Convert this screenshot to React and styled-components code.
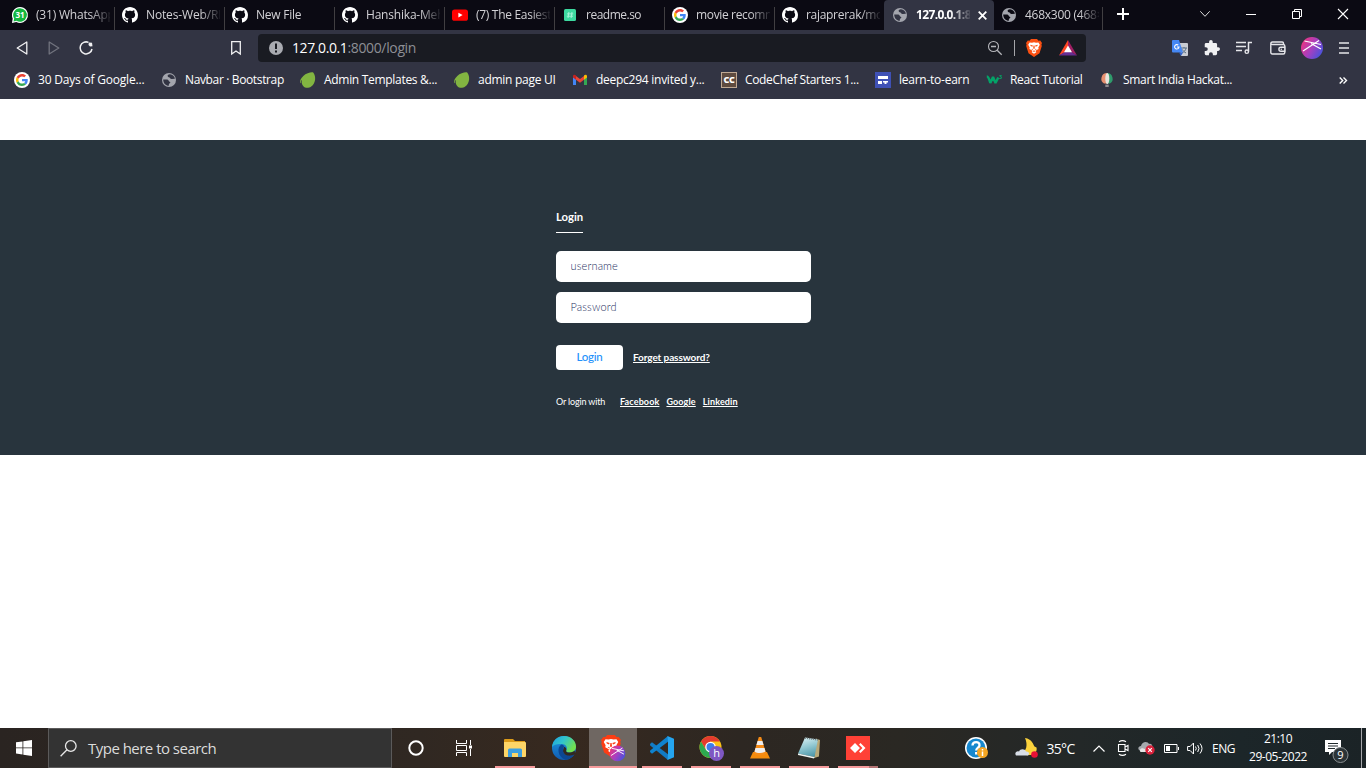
import React from 'react';
import styled, { createGlobalStyle } from 'styled-components';

const Global = createGlobalStyle`
  * { box-sizing: border-box; }
  html, body { margin: 0; padding: 0; background: #fff; }
  body { overflow: hidden; font-family: "Open Sans", "Noto Sans", sans-serif; }
  svg { display: block; flex: none; overflow: visible; }
`;

const Screen = styled.div`
  width: 1366px;
  height: 768px;
  display: flex;
  flex-direction: column;
  background: #fff;
`;

/* ---------- icons ---------- */
const Svg = ({ s = 16, h, vb, children }) => (
  <svg width={s} height={h || s} viewBox={vb || `0 0 ${s} ${h || s}`} fill="none">{children}</svg>
);

const WhatsApp = () => (
  <Svg>
    <path d="M8 0a8 8 0 1 1-3.700 15.100L0 16l.7-4.600A8 8 0 0 1 8 0z" fill="#fff" />
    <path d="M8 1.200a6.800 6.800 0 1 1-3.500 12.600L1.500 14.500l.7-3A6.800 6.800 0 0 1 8 1.200z" fill="#12b83f" />
    <text x="8" y="11" fontSize="8" fontWeight="700" fill="#fff" textAnchor="middle">31</text>
  </Svg>
);
const Github = () => (
  <Svg>
    <path fill="#fff" d="M8 0C3.580 0 0 3.580 0 8c0 3.540 2.290 6.530 5.470 7.590.4.070.55-.17.55-.38 0-.19-.01-.82-.01-1.490-2.010.37-2.530-.49-2.690-.94-.09-.23-.48-.94-.82-1.130-.28-.15-.68-.52-.01-.53.63-.01 1.080.58 1.230.82.72 1.210 1.870.87 2.330.66.070-.52.28-.87.51-1.070-1.780-.2-3.640-.89-3.640-3.950 0-.87.31-1.590.82-2.150-.08-.2-.36-1.020.08-2.120 0 0 .67-.21 2.200.82.64-.18 1.320-.27 2-.27s1.360.09 2 .27c1.530-1.040 2.200-.82 2.200-.82.44 1.100.16 1.920.08 2.120.51.56.82 1.270.82 2.150 0 3.070-1.870 3.750-3.650 3.950.29.25.54.73.54 1.480 0 1.070-.01 1.930-.01 2.200 0 .21.15.46.55.38A8.010 8.010 0 0 0 16 8c0-4.420-3.580-8-8-8z" />
  </Svg>
);
const YouTube = () => (
  <Svg>
    <rect x="0" y="2.500" width="16" height="11.300" rx="2.600" fill="#f00" />
    <path d="M6.400 5.700v4.800l4.200-2.400z" fill="#fff" />
  </Svg>
);
const Readme = () => (
  <Svg>
    <rect x="2" y="2" width="12" height="12" rx="1.500" fill="#3dd9a0" />
    <path d="M6.900 5L6 11M10 5l-.9 6M5 6.900h6.200M4.800 9.200H11" stroke="#a5f5d8" strokeWidth="1" />
  </Svg>
);
const Google = () => (
  <Svg vb="0 0 48 48">
    <circle cx="24" cy="24" r="24" fill="#fff" />
    <g transform="translate(6 6) scale(.75)">
      <path fill="#EA4335" d="M24 9.500c3.540 0 6.710 1.220 9.210 3.600l6.850-6.850C35.900 2.380 30.470 0 24 0 14.620 0 6.510 5.380 2.560 13.220l7.980 6.190C12.430 13.720 17.740 9.500 24 9.500z" />
      <path fill="#4285F4" d="M46.980 24.550c0-1.570-.15-3.090-.38-4.550H24v9.020h12.940c-.58 2.960-2.260 5.480-4.780 7.180l7.730 6c4.510-4.180 7.090-10.360 7.090-17.650z" />
      <path fill="#FBBC05" d="M10.530 28.590c-.48-1.450-.76-2.990-.76-4.590s.27-3.140.76-4.590l-7.980-6.190C.92 16.460 0 20.120 0 24s.92 7.540 2.560 10.780l7.970-6.190z" />
      <path fill="#34A853" d="M24 48c6.480 0 11.930-2.130 15.890-5.810l-7.730-6c-2.150 1.450-4.920 2.300-8.160 2.300-6.260 0-11.570-4.220-13.470-9.910l-7.980 6.190C6.510 42.620 14.620 48 24 48z" />
    </g>
  </Svg>
);
const Globe = ({ bg = '#323443' }) => (
  <Svg>
    <circle cx="8" cy="8" r="7" fill="#a3a5ad" />
    <path d="M9 2.300c-2 .1-2.600 1-2.300 2 .4 1.200 1.900.8 2.300 1.700.3.700 1 1 1.900.9l3-.2c-.3-2.400-2.200-4.200-4.900-4.400z" fill={bg} />
    <path d="M2.200 7.500l3.300.1c1.400 0 2 .6 2.300 1.300.3.800 1.600.6 1.500 1.700 0 .8-1.200.8-1.400 1.700l-.1 1.500c-3-.1-5.600-2.500-5.600-6.300z" fill={bg} />
  </Svg>
);
const Envato = () => (
  <Svg>
    <path d="M13.200.4c-1-.8-6.800.2-9.900 3.500C.9 6.400-.1 8 .1 10.600c.2.900.6.700.7 0 0-1.200.3-2 .7-2.300.3-.2.4-.1.300.3-.5 2.100.2 4.100 1.600 5.600 1.500 1.700 4.800 2.400 7.800.2C16 11.200 16.200 4 13.200.4z" fill="#82b541" />
  </Svg>
);
const Gmail = () => (
  <Svg>
    <path d="M1 4.500V13h3V7.200z" fill="#4285f4" />
    <path d="M15 4.500V13h-3V7.200z" fill="#34a853" />
    <path d="M4 3.900l4 3.200 4-3.200v3.800l-4 3-4-3z" fill="#ea4335" />
    <path d="M1 4.300C1 2.800 2.700 2.300 4 3.500v4.200L1 5.500z" fill="#c5221f" />
    <path d="M15 4.300C15 2.800 13.300 2.300 12 3.500v4.200l3-2.200z" fill="#fbbc04" />
  </Svg>
);
const CodeChef = () => (
  <Svg>
    <rect x=".5" y=".5" width="15" height="15" fill="#5f4b3f" stroke="#c0a993" />
    <text x="8" y="11.300" fontSize="9" fontWeight="800" fill="#fff" textAnchor="middle" letterSpacing="-.3">CC</text>
  </Svg>
);
const Learn = () => (
  <Svg>
    <path d="M0 0h16v16H0z" fill="#3f51b5" />
    <path d="M3 4h10v3H3zM3 9h4v3H3zM8 9h5v1.500h-1.500V12H9.500v-1.500H8z" fill="#fff" />
  </Svg>
);
const W3 = () => (
  <Svg>
    <path d="M.8 4.500C2 4.500 3 6 4.300 11L7 5l2.500 6 2.800-5.500" stroke="#04a268" strokeWidth="2.400" strokeLinejoin="bevel" />
    <text x="13" y="6.500" fontSize="5.500" fontWeight="700" fill="#04a268">3</text>
  </Svg>
);
const Balloon = () => (
  <Svg>
    <path d="M8 1a5.700 5.700 0 0 0-3 10.500h3z" fill="#e89070" />
    <path d="M8 1a5.700 5.700 0 0 1 3 10.500H8z" fill="#2f9b6c" />
    <ellipse cx="8.300" cy="6.500" rx="2" ry="5.500" fill="#e8e5df" />
    <path d="M6.300 12.600h3.400V15H6.300z" fill="#8d8a8f" />
  </Svg>
);

const BraveShape = ({ color }) => (
  <>
    <path d="M5 0h6l1.500 1.700 1.700-.1L16 4l-.6 1.600.4 1.400-2.300 7.300L8 18l-5.500-3.700L.2 7l.4-1.400L0 4l1.800-2.400 1.700.1z" fill={color} />
    <path d="M3.600 3.400L6 3.700l2-.4 2 .4 2.400-.3 1.400 2.400-1.500 2.700.3 1.500-1.900 1.100L9.500 12l.8 1.200L8 14.800l-2.300-1.600.8-1.200-1.200-.9L3.400 10l.3-1.500-1.500-2.700z" fill="#fff" />
    <path d="M4.300 5.800l2.600.8-.5 1.200-1.800-.9zM11.700 5.800l-2.600.8.5 1.200 1.800-.9zM7.500 6.500h1L8.800 9.200 8 10l-.8-.8zM5.300 10.200l1.200-.5.5 1.300zM10.700 10.200l-1.200-.5-.5 1.300zM6.600 12.100l1.400-.5 1.400.5L8 13z" fill={color} />
  </>
);
const BraveLion = () => <Svg s={16} h={18}><BraveShape color="#fb5012" /></Svg>;
const Bat = () => (
  <Svg s={18} h={16}>
    <path d="M9 0L0 15.500l9-5z" fill="#ff4724" />
    <path d="M9 0l9 15.500-9-5z" fill="#9e1f63" />
    <path d="M0 15.500h18L9 10z" fill="#662d91" />
    <path d="M9 5.500l4 6.700H5z" fill="#fff" />
  </Svg>
);
const Translate = () => (
  <Svg>
    <path d="M7 3h8a1 1 0 0 1 1 1v11a1 1 0 0 1-1 1H9z" fill="#c9ccd3" />
    <path d="M9 8h6M12 7v1M14 8c-.4 2.500-2 4-4 5M10.500 9.500c.6 1.600 2 2.800 3.500 3.400" stroke="#5b7086" strokeWidth="1" />
    <path d="M1 0h6l4 12.500H1a1 1 0 0 1-1-1V1a1 1 0 0 1 1-1z" fill="#4587f4" />
    <path d="M7 12.500h4L9 16z" fill="#3060c8" />
    <path d="M6.300 5.200A2.200 2.200 0 1 0 7 7H4.900" stroke="#fff" strokeWidth="1.100" />
  </Svg>
);
const Puzzle = () => (
  <Svg vb="1 1 22 22">
    <path fill="#f0f0f2" d="M20.500 11H19V7a2 2 0 0 0-2-2h-4V3.500a2.500 2.500 0 0 0-5 0V5H4a2 2 0 0 0-2 2v3.800h1.500a2.700 2.700 0 0 1 0 5.400H2V20a2 2 0 0 0 2 2h3.800v-1.500a2.700 2.700 0 0 1 5.400 0V22H17a2 2 0 0 0 2-2v-4h1.500a2.500 2.500 0 0 0 0-5z" />
  </Svg>
);
const Playlist = () => (
  <Svg>
    <path d="M0 2.500h10M0 6.500h10M0 10.500h6M12.500 11.500V2.500H16" stroke="#e6e6ea" strokeWidth="1.500" />
    <circle cx="10.800" cy="11.700" r="1.700" stroke="#e6e6ea" strokeWidth="1.400" />
  </Svg>
);
const Wallet = () => (
  <Svg>
    <path d="M13.500 4.500V3.300c0-.8-.5-1.300-1.300-1.300H2.500C1.500 2 .8 2.700.8 3.500v9c0 .9.600 1.500 1.500 1.500h11c.9 0 1.500-.6 1.500-1.500V6c0-.9-.6-1.500-1.500-1.500H2.500c-1 0-1.600-.5-1.600-1.100M15 7.300h-4.200c-2.500 0-2.500 4 0 4H15z" stroke="#e6e6ea" strokeWidth="1.400" />
    <circle cx="11.300" cy="9.300" r=".8" fill="#e6e6ea" />
  </Svg>
);
const Avatar = () => (
  <Svg s={22}>
    <defs>
      <linearGradient id="av" x1="0" y1="0.200" x2="1" y2="0.800">
        <stop offset="0" stopColor="#f0347c" /><stop offset=".5" stopColor="#a73fc0" /><stop offset="1" stopColor="#3d55e0" />
      </linearGradient>
    </defs>
    <circle cx="11" cy="11" r="11" fill="url(#av)" />
    <path d="M3.500 4L20 7.500M2 14L18 3.500M10 6.500l10 5.500" stroke="#fff" strokeWidth="1.200" />
  </Svg>
);

/* ---------- tab strip ---------- */
const TabStrip = styled.div`
  height: 30px;
  display: flex;
  padding-left: 5px;
  background: #0b0a13;
`;
const TabBox = styled.div`
  width: ${p => p.$w || 110}px;
  height: 30px;
  display: flex;
  align-items: center;
  gap: 8px;
  padding-left: ${p => p.$pad || 7}px;
  border-radius: ${p => (p.$active ? '4px 4px 0 0' : '0')};
  background: ${p => (p.$active ? '#323443' : p.$line ? 'linear-gradient(#413f42, #413f42) right bottom / 1px 23px no-repeat' : 'none')};
`;
const TabTitle = styled.span`
  width: ${p => p.$w || 74}px;
  overflow: hidden;
  white-space: nowrap;
  font-size: 12px;
  line-height: 18px;
  font-weight: ${p => (p.$active ? 700 : 400)};
  letter-spacing: ${p => p.$track || 0}px;
  color: ${p => (p.$active ? '#fff' : '#d2d1d5')};
  mask-image: linear-gradient(to right, #000 calc(100% - 20px), rgba(0, 0, 0, .1));
`;
const WindowSlot = styled.div`
  width: ${p => p.$w}px;
  height: 28px;
  display: flex;
  align-items: center;
  justify-content: center;
`;
const Spacer = styled.div`flex: 1;`;

const tabs = [
  { icon: <WhatsApp />, title: '(31) WhatsApp', track: -0.2 },
  { icon: <Github />, title: 'Notes-Web/RE', track: -0.15 },
  { icon: <Github />, title: 'New File', track: -0.25 },
  { icon: <Github />, title: 'Hanshika-Meh', track: -0.2 },
  { icon: <YouTube />, title: '(7) The Easiest', track: -0.3 },
  { icon: <Readme />, title: 'readme.so', track: -0.5 },
  { icon: <Google />, title: 'movie recomm', track: -0.35 },
  { icon: <Github />, title: 'rajaprerak/mo', track: -0.3, noLine: true, w: 109 },
  { icon: <Globe />, title: '127.0.0.1:8', track: -0.62, active: true, pad: 8 },
  { icon: <Globe bg="#0b0a13" />, title: '468x300 (468×', track: -0.25, w: 109 },
];

/* ---------- toolbar ---------- */
const Toolbar = styled.div`
  height: 36px;
  display: flex;
  align-items: center;
  background: #323443;
`;
const Slot = styled.div`
  width: ${p => p.$w}px;
  flex: none;
  display: flex;
  align-items: center;
  justify-content: center;
`;
const Address = styled.div`
  width: 828px;
  height: 28px;
  display: flex;
  align-items: center;
  padding-left: 11px;
  border-radius: 4px;
  background: #191b22;
`;
const Url = styled.span`
  margin-left: 9px;
  flex: 1;
  font-size: 14px;
  line-height: 20px;
  letter-spacing: -0.4px;
  color: #fff;
`;
const UrlRest = styled.span`
  letter-spacing: -0.36px;
  color: #8d8f95;
`;
const Divider = styled.div`
  width: 1px;
  height: ${p => p.$h || 16}px;
  background: #a5a6aa;
`;

/* ---------- bookmarks ---------- */
const Bookmarks = styled.div`
  height: 33px;
  display: flex;
  padding: 0 0 5px 14px;
  align-items: center;
  background: #323443;
`;
const Bookmark = styled.div`
  width: ${p => p.$w}px;
  display: flex;
  align-items: center;
  gap: 8px;
`;
const BookmarkText = styled.span`
  white-space: nowrap;
  font-size: 12px;
  line-height: 18px;
  letter-spacing: ${p => p.$track}px;
  color: #fff;
`;
const marks = [
  [<Google />, '30 Days of Google...', 147, -0.2],
  [<Globe />, 'Navbar · Bootstrap', 139, -0.36],
  [<Envato />, 'Admin Templates &...', 154, -0.3],
  [<Envato />, 'admin page UI', 118, -0.28],
  [<Gmail />, 'deepc294 invited y...', 149, -0.26],
  [<CodeChef />, 'CodeChef Starters 1...', 154, -0.34],
  [<Learn />, 'learn-to-earn', 111, -0.25],
  [<W3 />, 'React Tutorial', 113, -0.33],
  [<Balloon />, 'Smart India Hackat...', 140, -0.3],
];

/* ---------- page ---------- */
const Page = styled.main`
  height: 629px;
  padding-top: 41px;
  background: #fff;
`;
const Panel = styled.section`
  height: 315px;
  padding: 69px 0 0 556px;
  background: #28343d;
  color: #fff;
  font-family: Lato, sans-serif;
`;
const Form = styled.form`
  width: 255px;
  display: flex;
  flex-direction: column;
  align-items: flex-start;
`;
const Heading = styled.h1`
  margin: 0 0 18px;
  height: 24px;
  width: 27px;
  border-bottom: 1px solid #fff;
  white-space: nowrap;
  font-size: 11.3px;
  font-weight: 700;
  line-height: 16px;
`;
const Field = styled.input`
  width: 255px;
  height: 31px;
  margin: 0 0 10px;
  padding: 0 15px 2px 14.500px;
  border: 0;
  border-radius: 5px;
  background: #fff;
  font: 300 11px Lato, sans-serif;
  letter-spacing: 0.15px;
  &::placeholder { color: #1d2c60; opacity: 1; }
`;
const Actions = styled.div`
  display: flex;
  align-items: center;
  gap: 10px;
  margin-top: 12px;
`;
const Submit = styled.button`
  width: 67px;
  height: 25px;
  padding: 0 0 2px;
  border: 0;
  border-radius: 4px;
  background: #fff;
  color: #2491fb;
  font: 500 11.500px/22px Lato, sans-serif;
  letter-spacing: -0.25px;
`;
const Link = styled.a`
  font-size: ${p => p.$size}px;
  font-weight: 700;
  white-space: nowrap;
  letter-spacing: ${p => p.$track || 0}px;
  padding-bottom: ${p => p.$lift || 0}px;
  text-decoration: underline;
`;
const Social = styled.div`
  display: flex;
  align-items: center;
  margin-top: 25px;
  gap: 7px;
  line-height: 14px;
`;
const SocialLabel = styled.span`
  width: 57px;
  white-space: nowrap;
  font-size: 9px;
  letter-spacing: -0.15px;
`;

/* ---------- taskbar ---------- */
const Taskbar = styled.footer`
  height: 40px;
  display: flex;
  background: linear-gradient(to right, #2a2421 0, #302822 420px, #37291f 560px, #2d2722 740px, #2a2823 900px, #232828 1080px, #1c2629 1240px, #1b2326 1366px);
  color: #fff;
`;
const Search = styled.div`
  width: 344px;
  height: 40px;
  display: flex;
  align-items: center;
  gap: 11px;
  padding-left: 11px;
  border: 1px solid #5b5a5a;
  background: #333;
  color: #dcdcdc;
  font-size: 15px;
  letter-spacing: -0.52px;
`;
const TaskButton = styled.div`
  width: ${p => p.$w || 49}px;
  height: 40px;
  display: flex;
  flex-direction: column;
  align-items: center;
  justify-content: space-between;
  background: ${p => (p.$active ? '#6f6762' : 'transparent')};
`;
const AppIcon = styled.div`
  height: 38px;
  display: flex;
  align-items: center;
  padding-top: 2px;
`;
const Running = styled.div`
  width: ${p => p.$w || 40}px;
  height: 2px;
  background: ${p => p.$bg || '#f59a9b'};
`;
const TrayText = styled.span`
  font-size: ${p => p.$size || 12}px;
  letter-spacing: ${p => p.$track || 0}px;
  white-space: nowrap;
`;
const Clock = styled.div`
  width: 80px;
  padding-top: 2px;
  display: flex;
  flex-direction: column;
  align-items: center;
  font-size: 12px;
  line-height: 18px;
  letter-spacing: -0.48px;
`;

const Explorer = () => (
  <Svg s={22} h={20}>
    <path d="M0 2a1 1 0 0 1 1-1h8l2 2h10v4H0z" fill="#dc9b19" />
    <path d="M0 4h21a1 1 0 0 1 1 1v13a1 1 0 0 1-1 1H1a1 1 0 0 1-1-1z" fill="#fdd567" />
    <path d="M4 19v-7a1.500 1.500 0 0 1 1.500-1.500h11A1.500 1.500 0 0 1 18 12v7h-4v-4H8v4z" fill="#3d9fe0" />
  </Svg>
);
const Edge = () => (
  <Svg s={24}>
    <defs>
      <linearGradient id="e1" x1="0" y1="0" x2="1" y2=".5"><stop offset="0" stopColor="#1ba0e2" /><stop offset=".5" stopColor="#32c5cb" /><stop offset="1" stopColor="#72e04f" /></linearGradient>
      <linearGradient id="e2" x1="0" y1="0" x2="0" y2="1"><stop offset="0" stopColor="#1d98e2" /><stop offset="1" stopColor="#105bb0" /></linearGradient>
    </defs>
    <circle cx="12" cy="12" r="12" fill="url(#e2)" />
    <path d="M0 11C.6 4.500 5.500 0 12 0c7 0 12 5 12 10.500 0 4-3 6-6.500 6-3 0-3.800-1.200-3.300-2 1.600-2.300.4-6.500-4.200-6.500C6 7.500 1.500 8.500 0 11z" fill="url(#e1)" />
    <path d="M9.500 8.500C4.500 11 5.500 21 13.500 23.800 17.500 23.400 20.500 21.500 22.500 18.500c-5 2.500-12.300.2-11.500-5 .2-1.700 1-2.300 1-3 0-1-1-1.800-2.500-2z" fill="#0c4793" />
    <path d="M14.200 14.400c-.5 1.200 1 2.300 3.800 2.100 2-.1 3.700-.9 4.700-2l.4 3.500c-4 3-11 2-12-2.600-.3-2 .9-3.400.9-4.600 1.500.3 2.900 2 2.200 3.600z" fill="#302822" />
  </Svg>
);
const BraveTask = () => (
  <Svg s={24} h={26}>
    <g transform="scale(1.250 1.220)"><BraveShape color="#fb3d14" /></g>
    <g transform="translate(8.500 10.500) scale(.72)">
      <circle cx="11" cy="11" r="11" fill="url(#av)" />
      <path d="M3.500 4L20 7.500M2 14L18 3.500M10 6.500l10 5.500" stroke="#fff" strokeWidth="1.300" />
    </g>
  </Svg>
);
const VSCode = () => (
  <Svg s={24}>
    <path d="M0 8l2-1.700L18 18.300V24L.2 9.500z" fill="#127bc4" />
    <path d="M0 16l2 1.700L18 5.700V0L.2 14.500z" fill="#0f83cf" />
    <path d="M17.500 0L24 2.800v18.400L17.500 24l.5-5.700V5.700z" fill="#25a5ef" />
  </Svg>
);
const Chrome = () => (
  <Svg s={25} h={26}>
    <circle cx="11.500" cy="12" r="11" fill="#fbc116" />
    <path d="M2 6.500A11 11 0 0 1 21 6.500H11.500L7 15z" fill="#e33b2e" />
    <path d="M2 6.500a11 11 0 0 0 9 16.500l4.500-8.500-8.800-.1z" fill="#2da94f" />
    <circle cx="11.500" cy="12" r="5.300" fill="#fff" /><circle cx="11.500" cy="12" r="4" fill="#3e7de9" />
    <circle cx="17.500" cy="18.500" r="7.500" fill="#7e57c2" />
    <text x="17.500" y="22.300" fontSize="11" fill="#fff" textAnchor="middle">h</text>
  </Svg>
);
const VLC = () => (
  <Svg s={20} h={24}>
    <path d="M3 16h14l3 6.500H0z" fill="#f48b0b" />
    <path d="M8.800 1h2.400l5 16.500c-2 2.500-10.400 2.500-12.400 0z" fill="#f58b17" />
    <path d="M7.600 5h4.800l1.200 4H6.400zM5.500 12h9l1 3.500c-2.400 2-8.600 2-11 0z" fill="#eee" />
  </Svg>
);
const Notepad = () => (
  <Svg s={24}>
    <defs>
      <linearGradient id="np" x1=".3" y1="0" x2=".6" y2="1"><stop offset="0" stopColor="#d5eef2" /><stop offset=".5" stopColor="#8fc6d0" /><stop offset="1" stopColor="#4e97a8" /></linearGradient>
    </defs>
    <path d="M19 2.500l4 1.500-1 16.500-5 1.500z" fill="#b8a878" />
    <path d="M8 1.500l13 2L17.500 21 1 17.500z" fill="url(#np)" />
    <path d="M1 17.500L17.500 21l-.5 1.500L1 19z" fill="#eef5f2" />
    <path d="M8 2l13.500 2" stroke="#6f7b7d" strokeWidth="1.600" strokeDasharray="1 1" />
  </Svg>
);
const AnyDesk = () => (
  <Svg s={24}>
    <path d="M0 0h24v24H0z" fill="#ff4136" />
    <path d="M9 7l5 5-5 5-5-5zM13 8.500L14.500 7l5 5-5 5-1.500-1.500 3.500-3.500z" fill="#fff" />
  </Svg>
);

export default function App() {
  return (
    <Screen>
      <Global />
      <TabStrip>
        {tabs.map((t, i) => (
          <TabBox key={i} $w={t.w} $pad={t.pad} $active={t.active} $line={!t.noLine}>
            {t.icon}
            <TabTitle $active={t.active} $track={t.track} $w={t.active ? 54 : 74}>{t.title}</TabTitle>
            {t.active && <Svg s={9}><path d="M.7.700l7.600 7.600M8.300.7L.7 8.300" stroke="#fff" strokeWidth="1.800" /></Svg>}
          </TabBox>
        ))}
        <WindowSlot $w={40}><Svg s={12}><path d="M6 0v12M0 6h12" stroke="#fff" strokeWidth="2" /></Svg></WindowSlot>
        <Spacer />
        <WindowSlot $w={46}><Svg s={10} h={6}><path d="M.3.300L5 5.300 9.700.3" stroke="#ddd" /></Svg></WindowSlot>
        <WindowSlot $w={46}><Svg s={10}><path d="M0 5.500h10" stroke="#fff" /></Svg></WindowSlot>
        <WindowSlot $w={46}><Svg s={10}><path d="M.5 2.500h7v7h-7zM2.500 2.500v-2h7v7h-2" stroke="#fff" /></Svg></WindowSlot>
        <WindowSlot $w={46}><Svg s={10}><path d="M0 0l10 10M10 0L0 10" stroke="#fff" strokeWidth="1.100" /></Svg></WindowSlot>
      </TabStrip>

      <Toolbar>
        <Slot $w={44}><Svg s={12} h={14}><path d="M10.800 1v12L1.200 7z" stroke="#f0f0f2" strokeWidth="1.300" strokeLinejoin="round" /></Svg></Slot>
        <Slot $w={20}><Svg s={12} h={14}><path d="M1.200 1v12l9.600-6z" stroke="#71737e" strokeWidth="1.300" strokeLinejoin="round" /></Svg></Slot>
        <Slot $w={44}>
          <Svg s={14}>
            <path d="M9.500 1.400A6 6 0 1 0 13 8" stroke="#f0f0f2" strokeWidth="1.500" />
            <path d="M9.800 1.500l3.200.3.500 3.500-2.500.2-1.500-1.500z" fill="#f0f0f2" />
          </Svg>
        </Slot>
        <Slot $w={106} />
        <Slot $w={44}><Svg s={10} h={14}><path d="M.7.700h8.600v12.300L5 10l-4.300 3z" stroke="#f0f0f2" strokeWidth="1.300" /></Svg></Slot>
        <Address>
          <Svg s={14}><circle cx="7" cy="7" r="7" fill="#a9abb1" /><path d="M7 2.500v5.500M7 9.500v2" stroke="#191b22" strokeWidth="2" /></Svg>
          <Url>127.0.0.1<UrlRest>:8000/login</UrlRest></Url>
          <Slot $w={38}><Svg s={14}><circle cx="5.500" cy="5.500" r="5" stroke="#b5b6bb" strokeWidth="1.100" /><path d="M3 5.500h5M9.200 9.200l4.500 4.500" stroke="#b5b6bb" strokeWidth="1.300" /></Svg></Slot>
          <Divider />
          <Slot $w={38}><BraveLion /></Slot>
          <Slot $w={30}><Bat /></Slot>
          <Slot $w={3} />
        </Address>
        <Spacer />
        <Slot $w={32}><Translate /></Slot>
        <Slot $w={32}><Puzzle /></Slot>
        <Slot $w={32}><Playlist /></Slot>
        <Slot $w={36}><Wallet /></Slot>
        <Slot $w={32}><Avatar /></Slot>
        <Slot $w={32}><Svg s={10} h={12}><path d="M0 1h10M0 6h10M0 11h10" stroke="#e6e6ea" strokeWidth="1.700" /></Svg></Slot>
        <Slot $w={6} />
      </Toolbar>

      <Bookmarks>
        {marks.map(([icon, text, w, track]) => (
          <Bookmark key={text} $w={w}>{icon}<BookmarkText $track={track}>{text}</BookmarkText></Bookmark>
        ))}
        <Spacer />
        <Slot $w={46}><Svg s={8} h={7}><path d="M.7.500l3 3-3 3M4.500.5l3 3-3 3" stroke="#fff" strokeWidth="1.400" /></Svg></Slot>
      </Bookmarks>

      <Page>
        <Panel>
          <Form>
            <Heading>Login</Heading>
            <Field placeholder="username" />
            <Field placeholder="Password" />
            <Actions>
              <Submit type="button">Login</Submit>
              <Link $size={10} $track={-0.1} $lift={1.5}>Forget password?</Link>
            </Actions>
            <Social>
              <SocialLabel>Or login with</SocialLabel>
              <Link $size={9} $track={0.13}>Facebook</Link>
              <Link $size={9} $track={0.13}>Google</Link>
              <Link $size={9} $track={0.13}>Linkedin</Link>
            </Social>
          </Form>
        </Panel>
      </Page>

      <Taskbar>
        <Slot $w={48}><Svg><path d="M0 2.300l6.500-.9v6.100H0zM7.300 1.300L16 0v7.500H7.300zM0 8.300h6.500v6.200L0 13.600zM7.300 8.300H16V16l-8.700-1.300z" fill="#fff" /></Svg></Slot>
        <Search>
          <Svg s={17}><circle cx="10.800" cy="6" r="5.300" stroke="#e8e8e8" strokeWidth="1.300" /><path d="M7 9.800L.6 16.200" stroke="#e8e8e8" strokeWidth="1.300" /></Svg>
          Type here to search
        </Search>
        <Slot $w={48}><Svg><circle cx="8" cy="8" r="6.700" stroke="#fff" strokeWidth="2" /></Svg></Slot>
        <Slot $w={48}>
          <Svg s={16}><path d="M.5 0v3.500h10V0M.5 16v-3.500h10V16M.5 5.500h10v5H.5zM14.500 0v5M14.500 9v7" stroke="#fff" /><path d="M13 5.500h3v3h-3z" fill="#fff" /></Svg>
        </Slot>
        <Slot $w={3} />
        <TaskButton $w={48}><AppIcon><Explorer /></AppIcon><Running /></TaskButton>
        <TaskButton $w={50}><AppIcon><Edge /></AppIcon></TaskButton>
        <TaskButton $w={48} $active><AppIcon><BraveTask /></AppIcon><Running $w={48} /></TaskButton>
        <TaskButton $w={50}><AppIcon><VSCode /></AppIcon><Running /></TaskButton>
        <TaskButton $w={48}><AppIcon><Chrome /></AppIcon><Running /></TaskButton>
        <TaskButton $w={50}><AppIcon><VLC /></AppIcon><Running /></TaskButton>
        <TaskButton $w={48}><AppIcon><Notepad /></AppIcon><Running /></TaskButton>
        <TaskButton $w={50}><AppIcon><AnyDesk /></AppIcon><Running $bg="linear-gradient(to right, #f59a9b 31px, #b57575 31px)" /></TaskButton>
        <Spacer />
        <Slot $w={30}>
          <Svg s={23} h={22}>
            <circle cx="11" cy="11" r="11" fill="#fff" /><circle cx="11" cy="11" r="9.500" fill="#1688cf" />
            <path d="M7.500 8.500c0-4.500 7.500-4.500 7 0-.3 2.500-3.300 2.500-3.300 5M11.200 15v2.500" stroke="#fff" strokeWidth="2.300" />
            <circle cx="17.500" cy="15.500" r="5.500" fill="#f5a623" /><path d="M17.500 14.500V19M17.500 12v1.500" stroke="#fff" strokeWidth="1.500" />
          </Svg>
        </Slot>
        <Slot $w={23} />
        <Slot $w={24}>
          <Svg s={23} h={22}>
            <path d="M10 1c7 1 8 6 9.500 8.500l2 1c1 4-2 7-6 7.500-4 .4-8 0-9-2 5-2 6.500-8 3.500-15z" fill="#fbd23c" />
            <path d="M1 18.500c-2-3 1-5 3-4 1-3 6-3 7 0 3-.5 4 2.500 2 4z" fill="#d8dee6" />
            <circle cx="19.500" cy="17.500" r="3.300" fill="#e81136" />
          </Svg>
        </Slot>
        <Slot $w={45}><TrayText $size={14} $track={-0.7}>35°C</TrayText></Slot>
        <Slot $w={31}><Svg s={12} h={7}><path d="M.5 6.500L6 1l5.500 5.500" stroke="#fff" strokeWidth="1.200" /></Svg></Slot>
        <Slot $w={17}>
          <Svg s={12} h={16}><path d="M1.500 4.500h6.500v7H1.500zM8 7l3-1.500v5L8 9M2 1.800c2-1.300 5-1.300 7 0M2 14.200c2 1.300 5 1.300 7 0" stroke="#fff" strokeWidth="1.100" /></Svg>
        </Slot>
        <Slot $w={31}>
          <Svg s={17} h={14}>
            <path d="M3 10c-4-1-3-5 0-5 1-5 7-5 8-2 4-1 4 4 2 7z" fill="#a5a9ad" />
            <path d="M2.500 11c-2-3 2-5 4-3 2-2 5 0 4 3z" fill="#e4e5e6" />
            <circle cx="12" cy="9" r="4.700" fill="#d9213b" /><path d="M10.200 7.200l3.600 3.600M13.800 7.200l-3.600 3.600" stroke="#fff" strokeWidth="1.200" />
          </Svg>
        </Slot>
        <Slot $w={18}><Svg s={15} h={9}><path d="M.5.500h12.500v8H.5zM14.500 3v3" stroke="#fff" /><path d="M2 2h4v5H2z" fill="#fff" /></Svg></Slot>
        <Slot $w={29}><Svg s={16} h={13}><path d="M.6 4.500h2.500L6.500 1v11L3.100 8.500H.6z" stroke="#fff" /><path d="M8.500 4.500q1.500 2 0 4M10.700 3q2.600 3.500 0 7M13 1.500q4 5 0 10" stroke="#fff" /></Svg></Slot>
        <Slot $w={29}><TrayText $size={12} $track={-0.5}>ENG</TrayText></Slot>
        <Clock><span>21:10</span><span>29-05-2022</span></Clock>
        <Slot $w={37}>
          <Svg s={24} h={16}>
            <path d="M0 0h16v12H7l-3 3v-3H0z" fill="#fff" /><path d="M3 3.500h10M3 6h10M3 8.500h7" stroke="#222b2e" />
            <circle cx="15.500" cy="15" r="7.500" fill="#2c3437" stroke="#8b9092" />
            <text x="15.500" y="18.900" fontSize="11" fill="#fff" textAnchor="middle">9</text>
          </Svg>
        </Slot>
        <Slot $w={6} />
        <Divider $h={40} />
        <Slot $w={4} />
      </Taskbar>
    </Screen>
  );
}
